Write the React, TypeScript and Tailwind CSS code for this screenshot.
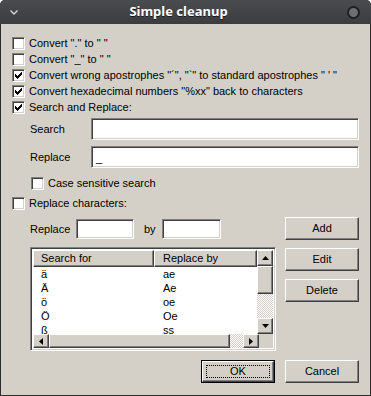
import React from 'react';

// classic 3d borders
const raised =
  'border border-t-white border-l-white border-r-[#404040] border-b-[#404040] shadow-[inset_-1px_-1px_#808080,inset_1px_1px_#d4d0c8] bg-[#d4d0c8]';
const sunken =
  'border border-t-[#808080] border-l-[#808080] border-r-white border-b-white shadow-[inset_1px_1px_#404040,inset_-1px_-1px_#d4d0c8]';
const hatch =
  'bg-[image:repeating-conic-gradient(#d4d0c8_0%_25%,#ffffff_0%_50%)] bg-[length:2px_2px]';

const Check: React.FC<{ checked?: boolean }> = ({ checked }) => (
  <span className={`w-[13px] h-[13px] bg-white shrink-0 flex items-center justify-center ${sunken}`}>
    {checked && (
      <svg width="7" height="7" viewBox="0 0 7 7">
        <path d="M0 2h1v1h1v1h1V3h1V2h1V1h1V0h1v3h-1v1h-1v1h-1v1h-1v1H2V6H1V5H0z" fill="#000" />
      </svg>
    )}
  </span>
);

const CheckRow: React.FC<{ checked?: boolean; label: string; indent?: boolean }> = ({ checked, label, indent }) => (
  <div className={`h-[16px] flex items-center gap-[4px] ${indent ? 'ml-[19px]' : ''}`}>
    <Check checked={checked} />
    <span className="whitespace-pre">{label}</span>
  </div>
);

const Btn: React.FC<{ label: string; def?: boolean; className?: string }> = ({ label, def, className = '' }) =>
  def ? (
    <div className={`w-[74px] h-[23px] border border-black ${className}`}>
      <div className={`w-full h-full flex items-center justify-center p-[3px] ${raised}`}>
        <div className="w-full h-full border border-dotted border-black flex items-center justify-center">{label}</div>
      </div>
    </div>
  ) : (
    <div className={`w-[74px] h-[23px] flex items-center justify-center ${raised} ${className}`}>{label}</div>
  );

const Arrow: React.FC<{ dir: 'up' | 'down' | 'left' | 'right' }> = ({ dir }) => {
  const d = {
    up: 'M3.5 0L7 4H0z',
    down: 'M0 0h7L3.5 4z',
    left: 'M4 0v7L0 3.5z',
    right: 'M0 0l4 3.5L0 7z',
  }[dir];
  const v = dir === 'up' || dir === 'down';
  return (
    <svg width={v ? 7 : 4} height={v ? 4 : 7} viewBox={v ? '0 0 7 4' : '0 0 4 7'}>
      <path d={d} fill="#000" />
    </svg>
  );
};

const rows = [
  ['ä', 'ae'],
  ['Ä', 'Ae'],
  ['ö', 'oe'],
  ['Ö', 'Oe'],
  ['ß', 'ss'],
];

export default function App() {
  return (
    <div className="w-[371px] h-[396px] bg-[#2b2d2f] rounded-t-[5px] overflow-hidden flex flex-col font-['Liberation_Sans',Arial,sans-serif] text-[11px] text-black">
      {/* title bar */}
      <div className="h-[24px] shrink-0 bg-gradient-to-b from-[#4a4d50] to-[#3a3c3f] flex items-center px-[10px] relative">
        <svg width="8" height="5" viewBox="0 0 8 5" className="mt-[1px]">
          <path d="M0.5 0.5L4 4L7.5 0.5" stroke="#d8d8d8" strokeWidth="1.3" fill="none" />
        </svg>
        <div className="flex-1 text-center pr-[8px] text-white font-bold text-[13px] font-['Noto_Sans',sans-serif] [text-shadow:0_1px_#1a1a1a]">
          Simple cleanup
        </div>
        <span className="w-[13px] h-[13px] rounded-full bg-[#6c6e70] border-2 border-[#1f2022] mr-[1px]" />
      </div>

      {/* body */}
      <div className="flex-1 mx-[1px] mb-[1px] bg-[#d4d0c8] pl-[11px] pr-[11px] pt-[11px] flex flex-col">
        <CheckRow label={'Convert "." to " "'} />
        <CheckRow label={'Convert "_" to " "'} />
        <CheckRow checked label={'Convert wrong apostrophes "´", "`" to standard apostrophes " \' "'} />
        <CheckRow checked label={'Convert hexadecimal numbers "%xx" back to characters'} />
        <CheckRow checked label="Search and Replace:" />

        <div className="flex items-center mt-[3px] ml-[18px]">
          <span className="w-[61px]">Search</span>
          <div className={`w-[268px] h-[22px] bg-white ${sunken}`} />
        </div>
        <div className="flex items-center mt-[6px] ml-[18px]">
          <span className="w-[61px]">Replace</span>
          <div className={`w-[268px] h-[22px] bg-white flex items-end pl-[4px] pb-[3px] leading-none ${sunken}`}>_</div>
        </div>

        <div className="mt-[7px]">
          <CheckRow indent label="Case sensitive search" />
        </div>
        <div className="mt-[4px]">
          <CheckRow label="Replace characters:" />
        </div>

        <div className="flex mt-[6px]">
          <div className="ml-[18px] w-[246px] flex flex-col">
            <div className="flex items-center mt-[2px] h-[20px]">
              <span className="w-[46px]">Replace</span>
              <div className={`w-[58px] h-[20px] bg-white ${sunken}`} />
              <span className="ml-[10px] w-[18px]">by</span>
              <div className={`w-[59px] h-[20px] bg-white ${sunken}`} />
            </div>

            {/* list */}
            <div className={`mt-[8px] w-[246px] h-[104px] bg-white p-[2px] flex flex-col ${sunken}`}>
              <div className="flex h-[84px]">
                <div className="w-[226px] flex flex-col overflow-hidden">
                  <div className="flex h-[17px] shrink-0">
                    <div className={`w-[121px] flex items-center pl-[7px] ${raised}`}>Search for</div>
                    <div className={`flex-1 flex items-center pl-[8px] ${raised}`}>Replace by</div>
                  </div>
                  {rows.map(([a, b]) => (
                    <div key={a} className="flex h-[14px] shrink-0 items-center">
                      <span className="w-[121px] pl-[8px]">{a}</span>
                      <span className="pl-[9px]">{b}</span>
                    </div>
                  ))}
                </div>
                <div className="w-[16px] flex flex-col">
                  <div className={`h-[16px] flex items-center justify-center ${raised}`}>
                    <Arrow dir="up" />
                  </div>
                  <div className={`h-[28px] ${raised}`} />
                  <div className={`flex-1 ${hatch}`} />
                  <div className={`h-[16px] flex items-center justify-center ${raised}`}>
                    <Arrow dir="down" />
                  </div>
                </div>
              </div>
              <div className="flex h-[16px]">
                <div className={`w-[16px] flex items-center justify-center ${raised}`}>
                  <Arrow dir="left" />
                </div>
                <div className={`w-[181px] ${raised}`} />
                <div className={`w-[13px] ${hatch}`} />
                <div className={`w-[16px] flex items-center justify-center ${raised}`}>
                  <Arrow dir="right" />
                </div>
                <div className="flex-1 bg-[#d4d0c8]" />
              </div>
            </div>
          </div>

          <div className="ml-[9px] flex flex-col gap-[8px]">
            <Btn label="Add" />
            <Btn label="Edit" />
            <Btn label="Delete" />
          </div>
        </div>

        <div className="flex justify-end gap-[10px] mt-[9px]">
          <Btn def label="OK" />
          <Btn label="Cancel" />
        </div>
      </div>
    </div>
  );
}
